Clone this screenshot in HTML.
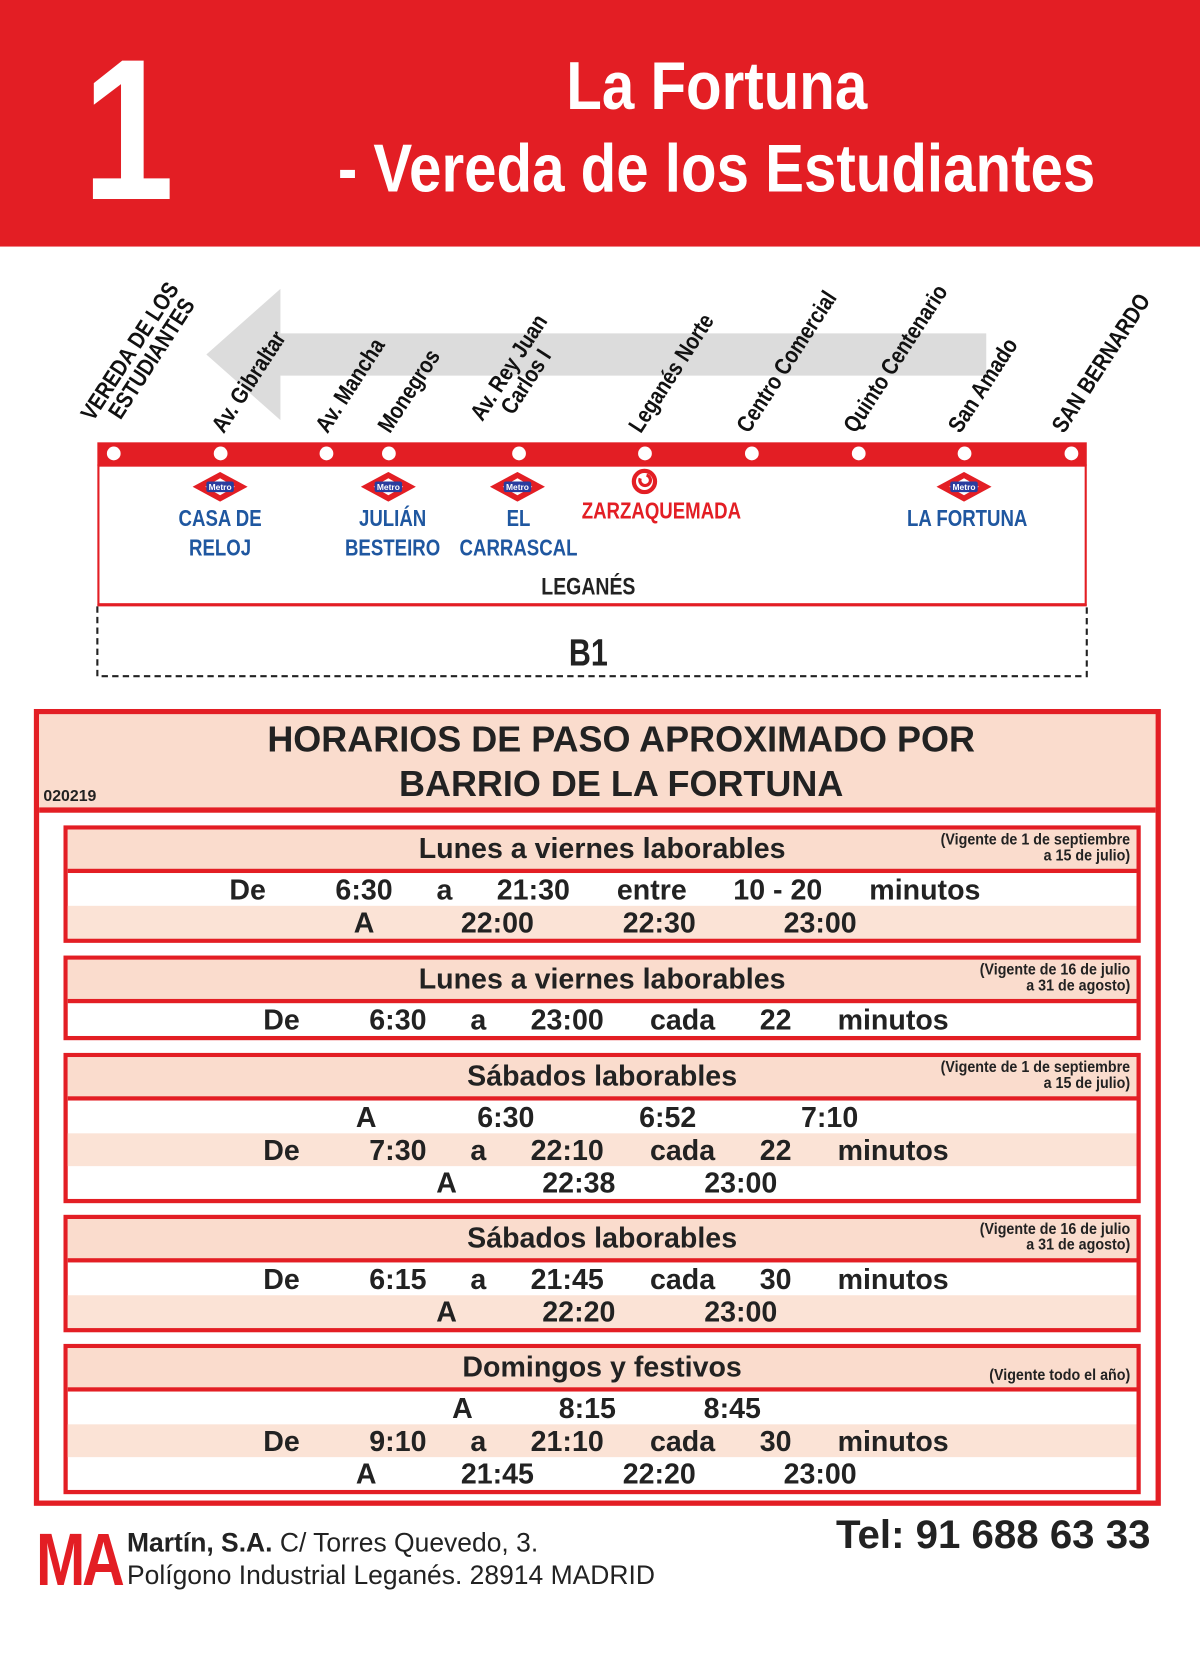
<!DOCTYPE html>
<html><head><meta charset="utf-8"><style>
html,body{margin:0;padding:0;background:#fff;}
body{width:1200px;height:1664px;overflow:hidden;position:relative;}
#w{position:absolute;left:0;top:0;width:1134px;height:1573px;transform:scale(1.0582);transform-origin:0 0;font-family:"Liberation Sans",sans-serif;}
.a{position:absolute;}
.n{font-weight:bold;}
.lab{position:absolute;transform-origin:0 100%;transform:rotate(-57deg) scaleX(0.84);font-weight:bold;font-size:22px;line-height:21px;white-space:nowrap;color:#111;}
.dot{position:absolute;width:13px;height:13px;border-radius:50%;background:#fff;top:422px;}
.blue{position:absolute;color:#1f57a0;font-weight:bold;font-size:22px;line-height:28px;text-align:center;transform:translateX(-50%) scaleX(0.8);white-space:nowrap;}
.metro{position:absolute;top:446px;width:52px;height:28px;transform:translateX(-50%);}
.sec{position:absolute;left:60px;width:1010px;border:4px solid #e31e24;background:#fff;}
.hd{position:relative;height:37px;background:#fadccd;border-bottom:4px solid #e31e24;}
.hd .t{position:absolute;left:0;right:0;text-align:center;top:3px;font-weight:bold;font-size:27px;color:#222;}
.hd .v{position:absolute;right:6px;top:2px;text-align:right;font-weight:bold;font-size:15px;line-height:15px;color:#222;transform:scaleX(0.9);transform-origin:100% 0;}
.r{position:relative;height:31px;}
.p{background:#fbe3d6;}
.r span{position:absolute;top:1px;transform:translateX(-50%);font-weight:bold;font-size:27px;color:#222;white-space:nowrap;}
.cx{display:inline-block;transform:scaleX(0.86);transform-origin:50% 0;white-space:nowrap;}
</style></head><body><div id="w">
<div class="a" style="left:0;top:0;width:1134px;height:233px;background:#e31e24;"></div>
<div class="a n" style="left:78px;top:28px;font-size:190px;line-height:190px;color:#fff;transform:scaleX(0.82);transform-origin:0 0;">1</div>
<div class="a n" style="left:177px;width:1000px;top:42px;text-align:center;color:#fff;font-size:64px;line-height:78px;"><span class="cx">La Fortuna</span><br><span class="cx">- Vereda de los Estudiantes</span></div>

<svg class="a" style="left:0;top:0" width="1134" height="660">
<polygon points="195,335 265,273 265,315 932,315 932,355 265,355 265,397" fill="#dcdcdc"/>
<rect x="92" y="418" width="935" height="22" fill="#e31e24"/>
<rect x="93" y="440" width="933" height="131" fill="none" stroke="#e31e24" stroke-width="2"/>
<line x1="92" y1="572" x2="1027" y2="572" stroke="#e31e24" stroke-width="2"/>
<path d="M92 573 V639 H1027 V573" fill="none" stroke="#222" stroke-width="2" stroke-dasharray="6,4"/>
<circle cx="609" cy="455" r="10" fill="none" stroke="#e31e24" stroke-width="4"/>
<path d="M605 452 a5 5 0 1 0 6 -3" fill="none" stroke="#e31e24" stroke-width="3"/>
</svg>
<div class="dot" style="left:101px"></div><div class="dot" style="left:202px"></div><div class="dot" style="left:302px"></div><div class="dot" style="left:361px"></div><div class="dot" style="left:484px"></div><div class="dot" style="left:603px"></div><div class="dot" style="left:704px"></div><div class="dot" style="left:805px"></div><div class="dot" style="left:905px"></div><div class="dot" style="left:1006px"></div>

<div class="lab" style="left:108px;top:370px;">VEREDA DE LOS<br>&nbsp;&nbsp;&nbsp;ESTUDIANTES</div>
<div class="lab" style="left:214px;top:391px;">Av. Gibraltar</div>
<div class="lab" style="left:312px;top:391px;">Av. Mancha</div>
<div class="lab" style="left:371px;top:391px;">Monegros</div>
<div class="lab" style="left:476px;top:370px;">Av. Rey Juan<br>&nbsp;&nbsp;&nbsp;&nbsp;Carlos I</div>
<div class="lab" style="left:608px;top:391px;">Leganés Norte</div>
<div class="lab" style="left:710px;top:391px;">Centro Comercial</div>
<div class="lab" style="left:811px;top:391px;">Quinto Centenario</div>
<div class="lab" style="left:910px;top:391px;">San Amado</div>
<div class="lab" style="left:1008px;top:391px;">SAN BERNARDO</div>

<svg class="metro" style="left:208px" viewBox="0 0 52 28"><polygon points="26,0 52,14 26,28 0,14" fill="#e31e24"/><polygon points="26,6 40,14 26,22 12,14" fill="#fff"/><rect x="13" y="9" width="26" height="10" rx="2" fill="#2a3d9e"/><text x="26" y="17" font-size="8" font-weight="bold" fill="#fff" text-anchor="middle" font-family="Liberation Sans">Metro</text></svg>
<svg class="metro" style="left:367px" viewBox="0 0 52 28"><polygon points="26,0 52,14 26,28 0,14" fill="#e31e24"/><polygon points="26,6 40,14 26,22 12,14" fill="#fff"/><rect x="13" y="9" width="26" height="10" rx="2" fill="#2a3d9e"/><text x="26" y="17" font-size="8" font-weight="bold" fill="#fff" text-anchor="middle" font-family="Liberation Sans">Metro</text></svg>
<svg class="metro" style="left:489px" viewBox="0 0 52 28"><polygon points="26,0 52,14 26,28 0,14" fill="#e31e24"/><polygon points="26,6 40,14 26,22 12,14" fill="#fff"/><rect x="13" y="9" width="26" height="10" rx="2" fill="#2a3d9e"/><text x="26" y="17" font-size="8" font-weight="bold" fill="#fff" text-anchor="middle" font-family="Liberation Sans">Metro</text></svg>
<svg class="metro" style="left:911px" viewBox="0 0 52 28"><polygon points="26,0 52,14 26,28 0,14" fill="#e31e24"/><polygon points="26,6 40,14 26,22 12,14" fill="#fff"/><rect x="13" y="9" width="26" height="10" rx="2" fill="#2a3d9e"/><text x="26" y="17" font-size="8" font-weight="bold" fill="#fff" text-anchor="middle" font-family="Liberation Sans">Metro</text></svg>

<div class="blue" style="left:208px;top:476px;">CASA DE<br>RELOJ</div>
<div class="blue" style="left:371px;top:476px;">JULIÁN<br>BESTEIRO</div>
<div class="blue" style="left:490px;top:476px;">EL<br>CARRASCAL</div>
<div class="blue" style="left:625px;top:469px;color:#e31e24;">ZARZAQUEMADA</div>
<div class="blue" style="left:914px;top:476px;">LA FORTUNA</div>
<div class="a n" style="left:556px;top:541px;transform:translateX(-50%) scaleX(0.8);font-size:23px;color:#222;">LEGANÉS</div>
<div class="a n" style="left:556px;top:596px;transform:translateX(-50%) scaleX(0.8);font-size:36px;color:#222;">B1</div>

<div class="a" style="left:32px;top:670px;width:1055px;height:743px;border:5px solid #e31e24;"></div>
<div class="a" style="left:37px;top:675px;width:1055px;height:88px;background:#fadccd;border-bottom:5px solid #e31e24;"></div>
<div class="a" style="left:37px;top:678px;width:1100px;text-align:center;font-weight:bold;font-size:34px;line-height:42px;color:#222;">HORARIOS DE PASO APROXIMADO POR<br>BARRIO DE LA FORTUNA</div>
<div class="a" style="left:41px;top:744px;font-weight:bold;font-size:15px;color:#222;">020219</div>

<div class="sec" style="top:780px;">
<div class="hd"><div class="t">Lunes a viernes laborables</div><div class="v">(Vigente de 1 de septiembre<br>a 15 de julio)</div></div>
<div class="r"><span style="left:170px">De</span><span style="left:280px">6:30</span><span style="left:356px">a</span><span style="left:440px">21:30</span><span style="left:552px">entre</span><span style="left:671px">10 - 20</span><span style="left:810px">minutos</span></div>
<div class="r p"><span style="left:280px">A</span><span style="left:406px">22:00</span><span style="left:559px">22:30</span><span style="left:711px">23:00</span></div>
</div>

<div class="sec" style="top:903px;">
<div class="hd"><div class="t">Lunes a viernes laborables</div><div class="v">(Vigente de 16 de julio<br>a 31 de agosto)</div></div>
<div class="r"><span style="left:202px">De</span><span style="left:312px">6:30</span><span style="left:388px">a</span><span style="left:472px">23:00</span><span style="left:581px">cada</span><span style="left:669px">22</span><span style="left:780px">minutos</span></div>
</div>

<div class="sec" style="top:995px;">
<div class="hd"><div class="t">Sábados laborables</div><div class="v">(Vigente de 1 de septiembre<br>a 15 de julio)</div></div>
<div class="r"><span style="left:282px">A</span><span style="left:414px">6:30</span><span style="left:567px">6:52</span><span style="left:720px">7:10</span></div>
<div class="r p"><span style="left:202px">De</span><span style="left:312px">7:30</span><span style="left:388px">a</span><span style="left:472px">22:10</span><span style="left:581px">cada</span><span style="left:669px">22</span><span style="left:780px">minutos</span></div>
<div class="r"><span style="left:358px">A</span><span style="left:483px">22:38</span><span style="left:636px">23:00</span></div>
</div>

<div class="sec" style="top:1148px;">
<div class="hd"><div class="t">Sábados laborables</div><div class="v">(Vigente de 16 de julio<br>a 31 de agosto)</div></div>
<div class="r"><span style="left:202px">De</span><span style="left:312px">6:15</span><span style="left:388px">a</span><span style="left:472px">21:45</span><span style="left:581px">cada</span><span style="left:669px">30</span><span style="left:780px">minutos</span></div>
<div class="r p"><span style="left:358px">A</span><span style="left:483px">22:20</span><span style="left:636px">23:00</span></div>
</div>

<div class="sec" style="top:1270px;">
<div class="hd"><div class="t">Domingos y festivos</div><div class="v" style="top:18px">(Vigente todo el año)</div></div>
<div class="r"><span style="left:373px">A</span><span style="left:491px">8:15</span><span style="left:628px">8:45</span></div>
<div class="r p"><span style="left:202px">De</span><span style="left:312px">9:10</span><span style="left:388px">a</span><span style="left:472px">21:10</span><span style="left:581px">cada</span><span style="left:669px">30</span><span style="left:780px">minutos</span></div>
<div class="r"><span style="left:282px">A</span><span style="left:406px">21:45</span><span style="left:559px">22:20</span><span style="left:711px">23:00</span></div>
</div>

<div class="a n" style="left:34px;top:1436px;font-size:70px;line-height:76px;color:#e31e24;letter-spacing:-4px;transform:scaleX(0.8);transform-origin:0 0;">MA</div>
<div class="a" style="left:120px;top:1443px;font-size:25px;line-height:31px;color:#222;white-space:nowrap;"><b>Martín, S.A.</b> C/ Torres Quevedo, 3.<br>Polígono Industrial Leganés. 28914 MADRID</div>
<div class="a" style="left:790px;top:1430px;font-weight:bold;font-size:38px;color:#222;white-space:nowrap;">Tel: 91 688 63 33</div>
</div></body></html>
